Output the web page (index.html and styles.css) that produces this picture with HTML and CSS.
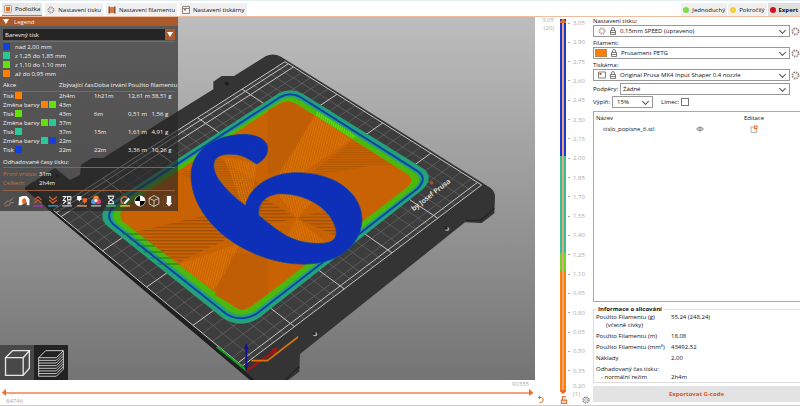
FILE: index.html
```html
<!DOCTYPE html>
<html lang="cs">
<head>
    <meta charset="UTF-8">
    <title>PrusaSlicer</title>
    <link rel="stylesheet" href="styles.css">
</head>
<body>
<header class="topbar">
    <nav class="tabs">
        <button class="tab active"><svg class="ico" viewBox="0 0 16 16"><rect x="1" y="1" width="14" height="14" rx="2" fill="#fbe3d5" stroke="#8a5a48"/><rect x="4" y="4" width="8" height="8" fill="#ed6b21"/></svg>Podložka</button>
        <button class="tab"><svg class="ico" viewBox="0 0 16 16"><circle cx="8" cy="8" r="6" fill="none" stroke="#777" stroke-width="2" stroke-dasharray="3 1.7"/><circle cx="8" cy="8" r="4" fill="none" stroke="#a0877c"/></svg>Nastavení tisku</button>
        <button class="tab"><svg class="ico" viewBox="0 0 16 16"><path d="M1 1h3v14H1zM12 1h3v14h-3z" fill="#8a5138"/><path d="M4 2h8v12H4z" fill="#d9773f"/></svg>Nastavení filamentu</button>
        <button class="tab"><svg class="ico" viewBox="0 0 16 16"><path d="M1 1h14v14H1zM1 5h14" fill="none" stroke="#666" stroke-width="1.5"/><path d="M4 5h4v4H4z" fill="#ed6b21"/></svg>Nastavení tiskárny</button>
    </nav>
    <div class="modes">
        <button class="mode"><i class="dot simple"></i>Jednoduchý</button>
        <button class="mode"><i class="dot advanced"></i>Pokročilý</button>
        <button class="mode selected"><i class="dot expert"></i>Expert</button>
    </div>
</header>

<main class="workspace">
    <section class="preview">
        <div class="canvas">
            <svg class="scene" viewBox="-240 -72 1605 1092" preserveAspectRatio="xMinYMax slice">
                <defs>
                    <pattern id="rows" width="20" height="10" patternUnits="userSpaceOnUse"><path d="M0 2H20" stroke="#8f4a06" stroke-width="3"/></pattern>
                    <pattern id="rowsFine" width="20" height="7" patternUnits="userSpaceOnUse"><path d="M0 2H20" stroke="#9d5207" stroke-width="2"/></pattern>
                    <pattern id="slant" width="7" height="20" patternUnits="userSpaceOnUse" patternTransform="rotate(14)"><path d="M2 0V20" stroke="#ec8509" stroke-width="2"/></pattern>
                    <pattern id="slantBack" width="7" height="20" patternUnits="userSpaceOnUse" patternTransform="rotate(-14)"><path d="M2 0V20" stroke="#ec8509" stroke-width="2"/></pattern>
                    <pattern id="slantGreen" width="7" height="20" patternUnits="userSpaceOnUse" patternTransform="rotate(14)"><path d="M2 0V20" stroke="#6be80c" stroke-width="3"/></pattern>
                    <pattern id="rowsGreen" width="20" height="18" patternUnits="userSpaceOnUse"><path d="M0 6H20" stroke="#1f6d2c" stroke-width="4"/></pattern>
                </defs>

                <!-- steel sheet -->
                <path d="M-165 441L-75 384L-30 420L0 405L3 375L36 354H69L400 148V125L425 108H462L558 48Q580 38 603 50L1232 444Q1245 455 1245 470L1243 520L1205 549L1155 547L660 942L658 995L625 1020H510L-165 448Z" fill="#343434"/>
                <path d="M-165 448L510 1020H524L-150 437Z" fill="#202020"/>
                <path d="M1243 505L1203 541H1158M658 980L615 1020" fill="none" stroke="#242424" stroke-width="4"/>
                <path d="M487 978L1205 435L615 65L-81 510Z" fill="#3d3d3d"/>
                <g id="grid"></g>
                <g fill="#1d1d1d"><circle cx="440" cy="131" r="6"/><circle cx="-68" cy="408" r="6"/></g>
                <g fill="#aaa"><ellipse cx="1101" cy="567" rx="7" ry="6"/><ellipse cx="705" cy="883" rx="7" ry="6"/></g>
                <g fill="#1d1d1d"><ellipse cx="1098" cy="565" rx="5" ry="4"/><ellipse cx="702" cy="881" rx="5" ry="4"/></g>
                <text class="sheet-text" transform="translate(1001 514) rotate(-38)">by Josef Prusa</text>
                <circle cx="1055" cy="429" r="5" fill="#b3522a"/>

                <!-- printed plate, outside in -->
                <path d="M597 159Q632 142 668 161L1032 387Q1064 415 1026 450L537 834Q480 868 428 834L82 558Q48 525 90 489Z" fill="#24a07b"/>
                <path d="M601 171Q632 154 664 173L1014 394Q1044 416 1011 447L529 822Q482 848 439 822L99 552Q72 525 108 491Z" fill="#24a07b" stroke="#0c45a6" stroke-width="6"/>
                <path d="M604 179Q632 165 660 181L1005 399Q1031 417 1002 445L524 813Q484 835 447 813L109 548Q87 524 119 492Z" fill="#4db80c"/>
                <path d="M600 190Q625 178 650 192L982 402Q1006 418 981 442L515 799Q488 818 460 799L129 545Q108 522 140 495Z" fill="#c96202"/>

                <!-- infill -->
                <path d="M563 210L625 184L700 225L610 400H563Z" fill="#bf5e04"/>
                <path d="M405 765L487 811L563 762V640L450 640Z" fill="#bf5e04"/>
                <path d="M705 228L815 298L650 410H590Z" fill="url(#slant)"/>
                <path d="M820 301L940 378L880 375L670 415Z" fill="url(#rowsFine)"/>
                <path d="M480 610L440 690L400 750L295 672Z" fill="url(#slant)"/>
                <path d="M170 575L480 500L540 550L300 665L260 645Z" fill="url(#rows)"/>
                <path d="M300 400L410 350L570 450L540 520L490 500Z" fill="url(#rowsFine)"/>
                <path d="M430 350L530 370L520 450L490 500Z" fill="url(#slantBack)"/>
                <path d="M530 460L650 535L530 560Z" fill="url(#rows)"/>
                <path d="M650 535L770 500V590Z" fill="url(#rows)"/>
                <path d="M650 535L590 460H720ZM650 535L610 610H740Z" fill="url(#slantBack)"/>
                <path d="M712 214L706 226L818 297L828 287Z" fill="url(#slantGreen)"/>
                <path d="M120 575L160 570L300 675L255 690Z" fill="url(#rowsGreen)" opacity=".7"/>

                <!-- the digit -->
                <path fill-rule="evenodd" fill="#0e2fb8" stroke="#0d4aa0" stroke-width="2" d="M530 372C550 362 565 345 563 322C560 296 525 283 490 283C435 284 382 304 354 342C335 367 331 397 334 425C340 478 368 526 410 567C462 618 535 652 605 666C665 677 722 675 768 652C815 628 842 590 846 545C848 493 818 452 768 424C730 404 682 397 640 398C588 401 545 420 516 455C505 469 499 482 497 497C465 475 435 445 417 420C404 401 397 378 404 362C413 343 442 340 471 344C496 348 514 362 530 372ZM536 526C532 495 552 468 590 462C628 459 662 467 698 485C733 504 758 532 767 565C774 596 758 610 720 610C680 611 641 602 607 580C580 562 557 544 536 526Z"/>

                <!-- axes and purge line -->
                <path d="M410 920L498 990" stroke="#0ba51c" stroke-width="6"/>
                <path d="M500 992L590 928" stroke="#a31515" stroke-width="7"/>
                <path d="M572 928L597 921L582 944Z" fill="#a31515"/>
                <path d="M514 962H562L654 891" fill="none" stroke="#d9730b" stroke-width="5"/>
                <path d="M499 990V925" stroke="#12128c" stroke-width="6"/>
                <path d="M492 928L499 908L506 928Z" fill="#12128c"/>
            </svg>

            <aside class="legend">
                <h2 class="legend-title"><span class="tri"></span>Legend</h2>
                <div class="legend-body">
                    <div class="view-type">
                        <select aria-label="Zobrazení"><option>Barevný tisk</option></select>
                        <span class="view-arrow"><span class="tri"></span></span>
                    </div>
                    <ul class="ranges">
                        <li><i class="sw blue"></i>nad 2,00 mm</li>
                        <li><i class="sw teal"></i>z 1,25 do 1,85 mm</li>
                        <li><i class="sw green"></i>z 1,10 do 1,10 mm</li>
                        <li><i class="sw orange"></i>až do 0,95 mm</li>
                    </ul>
                    <table class="events">
                        <thead>
                        <tr><th class="c-action">Akce</th><th class="c-left">Zbývající čas</th><th class="c-time">Doba trvání</th><th colspan="2">Použito filamentu</th></tr>
                        </thead>
                        <tbody>
                        <tr><td>Tisk <i class="sw orange"></i></td><td>2h4m</td><td>1h21m</td><td>12,61 m</td><td>38,51 g</td></tr>
                        <tr><td>Změna barvy <i class="sw orange"></i><i class="sw green"></i></td><td>43m</td><td></td><td></td><td></td></tr>
                        <tr><td>Tisk <i class="sw green"></i></td><td>43m</td><td>6m</td><td>0,51 m</td><td>1,56 g</td></tr>
                        <tr><td>Změna barvy <i class="sw green"></i><i class="sw teal"></i></td><td>37m</td><td></td><td></td><td></td></tr>
                        <tr><td>Tisk <i class="sw teal"></i></td><td>37m</td><td>15m</td><td>1,61 m</td><td>4,91 g</td></tr>
                        <tr><td>Změna barvy <i class="sw teal"></i><i class="sw blue"></i></td><td>22m</td><td></td><td></td><td></td></tr>
                        <tr><td>Tisk <i class="sw blue"></i></td><td>22m</td><td>22m</td><td>3,36 m</td><td>10,26 g</td></tr>
                        </tbody>
                    </table>
                    <h3 class="times-title">Odhadované časy tisku:</h3>
                    <dl class="times">
                        <dt>První vrstva:</dt><dd>31m</dd>
                        <dt>Celkem:</dt><dd>2h4m</dd>
                    </dl>
                    <div class="toggles">
                        <button aria-label="Přejezdy"><svg viewBox="0 0 22 22"><path d="M2 17L8 11H13L19 5M5 19H11L14 14H20" fill="none" stroke="#8b7468" stroke-width="2"/><path d="M2 20H9" stroke="#b55a31" stroke-width="2"/></svg></button>
                        <button aria-label="Vyčištění"><svg viewBox="0 0 22 22"><path d="M2 4L8 2H16L21 8V19H16V12L6 19H1Z" fill="#fff"/><path d="M8 8Q14 3 15 10Q15 16 11 17Q6 15 8 8" fill="#ed6b21"/></svg></button>
                        <button aria-label="Retrakce"><svg viewBox="0 0 22 22"><path d="M4 9L11 3L18 9M4 15L11 9L18 15" fill="none" stroke="#c4532c" stroke-width="2.5"/><path d="M2 20H20" stroke="#a130a8" stroke-width="3"/></svg></button>
                        <button aria-label="Deretrakce"><svg viewBox="0 0 22 22"><path d="M4 3L11 9L18 3M4 9L11 15L18 9" fill="none" stroke="#d0602d" stroke-width="2.5"/><path d="M2 20H20" stroke="#3886a5" stroke-width="3"/></svg></button>
                        <button aria-label="Švy"><svg viewBox="0 0 22 22"><path d="M3 3H9L4 10H9M12 3H18V9H12ZM4 16L9 11M12 12L18 17M18 12L12 17" fill="none" stroke="#eee" stroke-width="2"/><path d="M2 20H20" stroke="#ddd" stroke-width="2"/></svg></button>
                        <button aria-label="Změny nástroje"><svg viewBox="0 0 22 22"><path d="M2 2H10V9H8L6 12L4 9H2Z" fill="#fff"/><path d="M12 6H20V13H18L16 17L14 13H12Z" fill="#ed6b21"/><path d="M2 20H20" stroke="#c4905d" stroke-width="3"/></svg></button>
                        <button aria-label="Změny barvy"><svg viewBox="0 0 22 22"><circle cx="11" cy="6" r="5" fill="#f58634"/><circle cx="7" cy="12" r="5" fill="#4c9af0"/><circle cx="15" cy="12" r="5" fill="#dc3e80"/><circle cx="11" cy="10" r="3" fill="#fff3a0"/><path d="M2 20H20" stroke="#ddd" stroke-width="2"/></svg></button>
                        <button aria-label="Pauzy"><svg viewBox="0 0 22 22"><path d="M5 2H17M5 16H17M7 3V6L11 9L15 6V3M7 15V12L11 9L15 12V15" fill="none" stroke="#eee" stroke-width="2"/><path d="M2 20H20" stroke="#4daf61" stroke-width="3"/></svg></button>
                        <button aria-label="Vlastní G-kód"><svg viewBox="0 0 22 22"><path d="M15 5Q9 1 5 6Q2 12 7 16" fill="none" stroke="#ed6b21" stroke-width="3"/><path d="M8 15L17 5L20 8L11 17Z" fill="#fff"/><path d="M2 20H20" stroke="#d5b548" stroke-width="3"/></svg></button>
                        <button aria-label="Těžiště"><svg viewBox="0 0 22 22"><circle cx="11" cy="11" r="10" fill="#fff"/><path d="M11 2A9 9 0 0 0 2 11H11ZM11 20A9 9 0 0 0 20 11H11Z" fill="#000"/></svg></button>
                        <button aria-label="Skořepiny"><svg viewBox="0 0 22 22"><path d="M11 1L20 6V16L11 21L2 16V6ZM2 6L11 10L20 6M11 10V21" fill="none" stroke="#ddd" stroke-width="1.5"/></svg></button>
                        <button aria-label="Tryska"><svg viewBox="0 0 22 22"><rect x="1" y="1" width="20" height="20" fill="none" stroke="#8a4a28" stroke-width="1"/><path d="M7 2H15V14H17L12 20H10L5 14H7Z" fill="#fff"/></svg></button>
                    </div>
                </div>
            </aside>

            <div class="view-switch">
                <button aria-label="3D editor"><svg viewBox="0 0 34 34"><path d="M4 11H24V31H4ZM4 11L12 3H31L24 11M31 3V23L24 31" fill="none" stroke="#e6e6e6" stroke-width="1.5"/></svg></button>
                <button class="on" aria-label="Náhled"><svg viewBox="0 0 34 34"><path d="M3 11H23L31 3H11ZM3 14H23L31 6M3 17H23L31 9M3 20H23L31 12M3 23H23L31 15M3 26H23L31 18M3 29H23L31 21M3 32H23L31 24V3M3 11V32" fill="none" stroke="#ddd"/></svg></button>
            </div>
        </div>
        <div class="moves">
            <output class="move-high">90355</output>
            <div class="move-track">
                <i class="move-start"></i>
                <input type="range" min="84746" max="90355" value="90355" aria-label="Pohyby">
            </div>
            <output class="move-low">84746</output>
        </div>
    </section>

    <section class="layers">
        <output class="layer-now">3,05<br>(20)</output>
        <div class="layer-bar">
            <input type="range" min="1" max="20" value="20" aria-label="Vrstvy">
            <i class="layer-end"></i>
        </div>
        <ol class="ticks">
            <li>3,05</li><li>2,90</li><li>2,75</li><li>2,60</li><li>2,45</li><li>2,30</li><li>2,15</li><li>2,00</li><li>1,85</li><li>1,70</li>
            <li>1,55</li><li>1,40</li><li>1,25</li><li>1,10</li><li>0,95</li><li>0,80</li><li>0,65</li><li>0,50</li><li>0,35</li><li class="last">0,20<br>(1)</li>
        </ol>
        <div class="layer-tools">
            <button aria-label="Zpět"><svg viewBox="0 0 16 16"><path d="M3 3H9A5 5 0 1 1 5 13M6 0L3 3L6 6" fill="none" stroke="#ed6b21" stroke-width="2"/></svg></button>
            <button aria-label="Zámek"><svg viewBox="0 0 16 16"><path d="M3 8H13V15H3ZM5 8V4A3 3 0 0 1 11 3" fill="none" stroke="#ed6b21" stroke-width="2.5"/><path d="M8 10V13" stroke="#ed6b21" stroke-width="2"/></svg></button>
            <button aria-label="Možnosti"><svg viewBox="0 0 16 16"><circle cx="8" cy="8" r="6" fill="none" stroke="#777" stroke-width="2.5" stroke-dasharray="3 1.7"/><circle cx="8" cy="8" r="3" fill="none" stroke="#999" stroke-width="1.5"/></svg></button>
        </div>
    </section>

    <section class="sidebar">
        <label for="print">Nastavení tisku:</label>
        <div class="preset">
            <div class="combo">
                <svg class="ico" viewBox="0 0 16 16"><circle cx="8" cy="8" r="6" fill="none" stroke="#8a7a73" stroke-width="2" stroke-dasharray="3 1.7"/><circle cx="8" cy="8" r="4" fill="none" stroke="#c9977f"/></svg>
                <svg class="ico lock" viewBox="0 0 16 16"><path d="M3 7H13V15H3ZM5 7V4A3 3 0 0 1 11 4V7M3 11H13" fill="none" stroke="#555" stroke-width="1.5"/></svg>
                <select id="print"><option>0.15mm SPEED (upraveno)</option></select>
            </div>
            <button class="cog" aria-label="Upravit tisk"><svg viewBox="0 0 16 16"><circle cx="8" cy="8" r="6" fill="none" stroke="#8a7a73" stroke-width="2" stroke-dasharray="3 1.7"/><circle cx="8" cy="8" r="4" fill="none" stroke="#c9977f"/></svg></button>
        </div>
        <label for="filament">Filament:</label>
        <div class="preset">
            <div class="combo">
                <span class="filament-color"></span>
                <svg class="ico lock" viewBox="0 0 16 16"><path d="M3 7H13V15H3ZM5 7V4A3 3 0 0 1 11 4V7M3 11H13" fill="none" stroke="#555" stroke-width="1.5"/></svg>
                <select id="filament"><option>Prusament PETG</option></select>
            </div>
            <button class="cog" aria-label="Upravit filament"><svg viewBox="0 0 16 16"><circle cx="8" cy="8" r="6" fill="none" stroke="#8a7a73" stroke-width="2" stroke-dasharray="3 1.7"/><circle cx="8" cy="8" r="4" fill="none" stroke="#c9977f"/></svg></button>
        </div>
        <label for="printer">Tiskárna:</label>
        <div class="preset">
            <div class="combo">
                <svg class="ico" viewBox="0 0 16 16"><path d="M1 2h14v12H1z" fill="none" stroke="#555" stroke-width="1.5"/><path d="M3 4h4v4H3z" fill="#c8552a"/></svg>
                <svg class="ico lock" viewBox="0 0 16 16"><path d="M3 7H13V15H3ZM5 7V4A3 3 0 0 1 11 4V7M3 11H13" fill="none" stroke="#555" stroke-width="1.5"/></svg>
                <select id="printer"><option>Original Prusa MK4 Input Shaper 0.4 nozzle</option></select>
            </div>
            <button class="cog" aria-label="Upravit tiskárnu"><svg viewBox="0 0 16 16"><circle cx="8" cy="8" r="6" fill="none" stroke="#8a7a73" stroke-width="2" stroke-dasharray="3 1.7"/><circle cx="8" cy="8" r="4" fill="none" stroke="#c9977f"/></svg></button>
        </div>
        <div class="row">
            <label for="supports">Podpěry:</label>
            <div class="combo supports"><select id="supports"><option>Žádné</option></select></div>
        </div>
        <div class="row">
            <label for="infill">Výplň:</label>
            <div class="combo infill"><select id="infill"><option>15%</option></select></div>
            <label for="brim">Límec:</label>
            <input type="checkbox" id="brim">
        </div>

        <div class="objects">
            <table>
                <thead><tr><th>Název</th><th class="c-eye"></th><th class="c-edit">Editace</th></tr></thead>
                <tbody>
                <tr>
                    <td class="name">cislo_popisne_6.stl</td>
                    <td class="c-eye"><svg class="ico" viewBox="0 0 16 16"><path d="M1 8Q8 0 15 8Q8 16 1 8Z" fill="none" stroke="#666" stroke-width="1.5"/><circle cx="8" cy="8" r="2.5" fill="none" stroke="#666" stroke-width="1.5"/></svg></td>
                    <td class="c-edit"><svg class="ico" viewBox="0 0 16 16"><path d="M8 4H2V15H13V8" fill="none" stroke="#999" stroke-width="1.5"/><rect x="9" y="2" width="5" height="5" fill="none" stroke="#ed6b21" stroke-width="2"/></svg></td>
                </tr>
                </tbody>
            </table>
        </div>

        <fieldset class="info">
            <legend>Informace o slicování</legend>
            <dl>
                <dt>Použito Filamentu (g)<span class="sub">(včetně cívky)</span></dt><dd>55,24 (248,24)</dd>
                <dt>Použito Filamentu (m)</dt><dd>18,08</dd>
                <dt>Použito Filamentu (mm³)</dt><dd>43492,52</dd>
                <dt>Náklady</dt><dd>2,00</dd>
                <dt>Odhadovaný čas tisku:<span class="sub mode-line">- normální režim</span></dt><dd class="end">2h4m</dd>
            </dl>
        </fieldset>
        <button class="export">Exportovat G-code</button>
    </section>
</main>
<script src="scene.js"></script>
</body>
</html>
```
FILE: styles.css
```css
* {
    box-sizing: border-box;
}

body {
    margin: 0;
    height: 100vh;
    display: flex;
    flex-direction: column;
    background: #fff;
    border-bottom: 1px solid #ccc;
    font-family: "Open Sans", "Noto Sans", sans-serif;
    font-size: 6px;
    line-height: 8px;
    color: #111;
    overflow: hidden;
}

button,
select,
input {
    font: inherit;
    color: inherit;
    margin: 0;
    padding: 0;
    border: none;
    background: none;
}

h2, h3, ul, ol, dl, dd {
    margin: 0;
    padding: 0;
    font-size: inherit;
    font-weight: normal;
    list-style: none;
}

svg {
    display: block;
}

.ico {
    width: 8px;
    height: 8px;
    flex: none;
}

/* top bar */
.topbar {
    display: flex;
    justify-content: space-between;
    height: 17px;
    padding: 2px 0 0 2px;
    border-top: 1px solid #e5eef0;
    border-bottom: 1px solid #eebd9f;
}

.tabs,
.modes {
    display: flex;
    gap: 3px;
}

.modes {
    gap: 1px;
}

.tab,
.mode {
    display: flex;
    align-items: center;
    gap: 3px;
    padding: 0 2px;
    background: #f0f0f0;
}

.tab.active {
    background: #e6e6e6;
    border-bottom: 1px solid #ed6b21;
}

.mode.selected {
    background: #e0e0e0;
    font-weight: bold;
}

.dot {
    width: 6px;
    height: 6px;
    border-radius: 50%;
}

.simple {
    background: #7dd94c;
}

.advanced {
    background: #f2cf3b;
}

.expert {
    background: #d80f20;
}

/* main area */
.workspace {
    flex: 1;
    min-height: 0;
    display: grid;
    grid-template-columns: minmax(0, 1fr) 55px 210px;
}

.preview {
    display: flex;
    flex-direction: column;
    min-height: 0;
}

.canvas {
    position: relative;
    flex: 1;
    min-height: 0;
    background: linear-gradient(#bdbdbd, #747474);
    overflow: hidden;
}

.scene {
    position: absolute;
    inset: 0;
    width: 100%;
    height: 100%;
}

.sheet-text {
    font-size: 21px;
    font-weight: 600;
    fill: #e5e5e5;
}

/* legend */
.legend {
    position: absolute;
    top: 0;
    left: 0;
    width: 178px;
    background: rgba(40, 40, 40, .66);
    color: #f2f2f2;
}

.legend-title {
    display: flex;
    align-items: center;
    gap: 5px;
    height: 9px;
    padding: 0 3px;
    background: #ab5a2c;
}

.tri {
    width: 6px;
    height: 5px;
    background: #fff;
    clip-path: polygon(0 0, 100% 0, 50% 100%);
}

.legend-body {
    padding: 3px 3px 4px;
}

.view-type {
    display: flex;
    height: 11px;
    background: #252525;
}

.view-type select {
    flex: 1;
    appearance: none;
    padding: 0 2px;
}

.view-arrow {
    width: 10px;
    display: grid;
    place-items: center;
    background: #ab5a2c;
}

.ranges {
    margin-top: 1px;
    border-top: 1px solid #96603f;
}

.ranges li {
    display: flex;
    align-items: center;
    gap: 4px;
    height: 9px;
}

.sw {
    display: inline-block;
    width: 7px;
    height: 7px;
    margin-right: 1px;
    vertical-align: middle;
    flex: none;
}

.blue {
    background: #1240dc;
}

.teal {
    background: #2bc795;
}

.green {
    background: #62e20c;
}

.orange {
    background: #ff8000;
}

.events {
    width: 100%;
    margin-top: 2px;
    border-collapse: collapse;
    table-layout: fixed;
    white-space: nowrap;
}

.events th {
    height: 11px;
    padding: 0;
    text-align: left;
    font-weight: normal;
    border-bottom: 1px solid #96603f;
}

.events td {
    height: 9px;
    padding: 0;
    line-height: 9px;
}

.c-action {
    width: 56px;
}

.c-left {
    width: 35px;
}

.c-time {
    width: 34px;
}

.times-title {
    height: 13px;
    padding-top: 3px;
    border-bottom: 1px solid #96603f;
}

.times {
    display: grid;
    grid-template-columns: 36px 1fr;
    row-gap: 1px;
    padding: 2px 0 3px;
}

.times dt {
    color: #c9703f;
}

.toggles {
    display: flex;
    justify-content: space-between;
    padding-top: 4px;
    border-top: 1px solid #96603f;
}

.toggles button {
    width: 12px;
    height: 12px;
}

.view-switch {
    position: absolute;
    left: 0;
    bottom: 0;
    display: flex;
    background: #484848;
}

.view-switch button {
    width: 34px;
    height: 35px;
    padding: 2px;
}

.view-switch .on {
    background: #222;
}

/* horizontal slider */
.moves {
    display: flex;
    flex-direction: column;
    height: 25px;
    padding: 0 2px;
    color: #aaa;
}

.move-high {
    align-self: flex-end;
    padding-right: 4px;
}

.move-low {
    padding-left: 4px;
}

.move-track {
    display: flex;
    align-items: center;
    height: 9px;
}

.move-start {
    width: 4px;
    height: 7px;
    background: #ed6b21;
    clip-path: polygon(100% 0, 100% 100%, 0 50%);
}

.move-track input {
    flex: 1;
    min-width: 0;
    height: 7px;
    appearance: none;
    background: linear-gradient(#f3a27a, #f3a27a) center / 100% 2px no-repeat;
}

.move-track input::-webkit-slider-thumb {
    appearance: none;
    width: 4px;
    height: 7px;
    background: #ed6b21;
    clip-path: polygon(0 0, 0 100%, 100% 50%);
}

/* vertical slider */
.layers {
    display: grid;
    grid-template-columns: 23px 10px 1fr;
    grid-template-rows: minmax(0, 1fr) 11px;
    color: #aaa;
}

.layer-now {
    text-align: right;
    padding-right: 4px;
    margin-top: -1px;
}

.layer-bar {
    display: flex;
    flex-direction: column;
    align-items: center;
    padding-top: 2px;
    min-height: 0;
}

.layer-bar input {
    flex: 1;
    min-height: 0;
    width: 6px;
    appearance: none;
    writing-mode: vertical-lr;
    direction: rtl;
    background:
        linear-gradient(#e3a587, #e3a587) center / 2px 100% no-repeat,
        linear-gradient(#1d38cf 37%, #31c391 37% 63%, #6bd81e 63% 68%, #ff7f00 68%);
}

.layer-bar input::-webkit-slider-thumb {
    appearance: none;
    width: 6px;
    height: 4px;
    background: #ed6b21;
    clip-path: polygon(50% 0, 100% 60%, 100% 100%, 0 100%, 0 60%);
}

.layer-end {
    width: 6px;
    height: 4px;
    background: #ed6b21;
    clip-path: polygon(0 0, 100% 0, 100% 40%, 50% 100%, 0 40%);
}

.ticks {
    display: flex;
    flex-direction: column;
    justify-content: space-between;
    padding-top: 2px;
    margin-bottom: -4px;
}

.ticks li {
    display: flex;
    align-items: center;
    gap: 3px;
}

.ticks li::before {
    content: "";
    width: 2px;
    height: 1px;
    background: #aaa;
}

.ticks .last {
    display: block;
    padding-left: 5px;
    margin-top: -4px;
}

.ticks .last::before {
    display: none;
}

.layer-tools {
    grid-column: 1 / -1;
    display: flex;
    justify-content: space-between;
    padding: 2px 0 0 2px;
}

.layer-tools button {
    width: 8px;
    height: 8px;
}

/* right panel */
.sidebar {
    display: flex;
    flex-direction: column;
    min-height: 0;
    padding: 0 0 3px 3px;
}

.preset {
    display: flex;
    align-items: center;
    gap: 1px;
    height: 12px;
    margin-bottom: 2px;
}

.combo {
    position: relative;
    flex: 1;
    display: flex;
    align-items: center;
    gap: 3px;
    height: 12px;
    padding-left: 4px;
    border: 1px solid #999;
    background: #fff;
}

.combo::after {
    content: "";
    position: absolute;
    right: 4px;
    top: 2px;
    width: 4px;
    height: 4px;
    border: solid #555;
    border-width: 0 1px 1px 0;
    transform: rotate(45deg);
}

.combo select {
    flex: 1;
    min-width: 0;
    height: 10px;
    appearance: none;
}

.filament-color {
    width: 12px;
    height: 8px;
    margin-left: -3px;
    background: #ff8000;
    border: 1px solid #b98554;
}

.cog {
    width: 9px;
    height: 8px;
}

.row {
    display: flex;
    align-items: center;
    gap: 2px;
    margin-bottom: 1px;
}

.row .combo {
    padding-left: 2px;
}

.row .supports {
    margin-right: 10px;
}

.row .infill {
    flex: none;
    width: 41px;
    margin-right: 6px;
    padding-left: 4px;
}

.row input {
    width: 8px;
    height: 8px;
    appearance: none;
    border: 1px solid #777;
}

.objects {
    flex: 1;
    min-height: 0;
    margin-top: 2px;
    border: 1px solid #aaa;
    border-right: none;
}

.objects table {
    width: 100%;
    border-collapse: collapse;
    table-layout: fixed;
}

.objects th,
.objects td {
    height: 11px;
    padding: 0 2px;
    text-align: left;
    font-weight: normal;
}

.objects .name {
    padding-left: 9px;
}

.objects .c-eye {
    width: 14px;
}

.objects .c-edit {
    width: 92px;
    text-align: center;
}

.objects .c-edit .ico {
    margin: 0 auto;
}

.info {
    margin: 3px 0;
    padding: 0 2px 1px;
    border: 1px solid #ddd;
    border-right: none;
}

.info legend {
    padding: 0 2px;
    font-weight: bold;
}

.info dl {
    display: grid;
    grid-template-columns: 75px 1fr;
    row-gap: 3px;
}

.sub {
    display: block;
    padding-left: 10px;
}

.mode-line {
    padding-left: 5px;
}

.info .end {
    align-self: end;
}

.export {
    height: 16px;
    flex: none;
    background: #e3e3e3;
    color: #dc5424;
    font-weight: bold;
}
```
FILE: scene.js
```js
// corners of the print area: origin, end of x, far corner, end of y
const O = [487, 978], X = [1205, 435], F = [615, 65], Y = [-81, 510];
const BED_X = 250, BED_Y = 210;

const d1 = [X[0] - F[0], X[1] - F[1]];
const d2 = [Y[0] - F[0], Y[1] - F[1]];
const s = [O[0] - X[0] + F[0] - Y[0], O[1] - X[1] + F[1] - Y[1]];
const den = d1[0] * d2[1] - d2[0] * d1[1];
const g = (s[0] * d2[1] - d2[0] * s[1]) / den;
const h = (d1[0] * s[1] - s[0] * d1[1]) / den;

function project(x, y) {
    const u = x / BED_X, v = y / BED_Y;
    const w = g * u + h * v + 1;
    return [0, 1].map(i =>
        ((X[i] - O[i] + g * X[i]) * u + (Y[i] - O[i] + h * Y[i]) * v + O[i]) / w
    );
}

function addLine(x1, y1, x2, y2, major) {
    const line = document.createElementNS('http://www.w3.org/2000/svg', 'path');
    line.setAttribute('d', 'M' + project(x1, y1) + 'L' + project(x2, y2));
    line.setAttribute('stroke', major ? '#c4c4c4' : '#686868');
    line.setAttribute('stroke-width', major ? 3 : 2);
    document.getElementById('grid').appendChild(line);
}

for (const major of [false, true]) {
    for (let x = 0; x <= BED_X; x += 10) {
        if ((x % 50 === 0) === major) addLine(x, 0, x, BED_Y, major);
    }
    for (let y = 0; y <= BED_Y; y += 10) {
        if ((y % 50 === 0 || y === BED_Y) === major) addLine(0, y, BED_X, y, major);
    }
}
// inner margin lines along the front and back edges
addLine(0, 4, BED_X, 4, true);
addLine(0, 206, BED_X, 206, true);
```
